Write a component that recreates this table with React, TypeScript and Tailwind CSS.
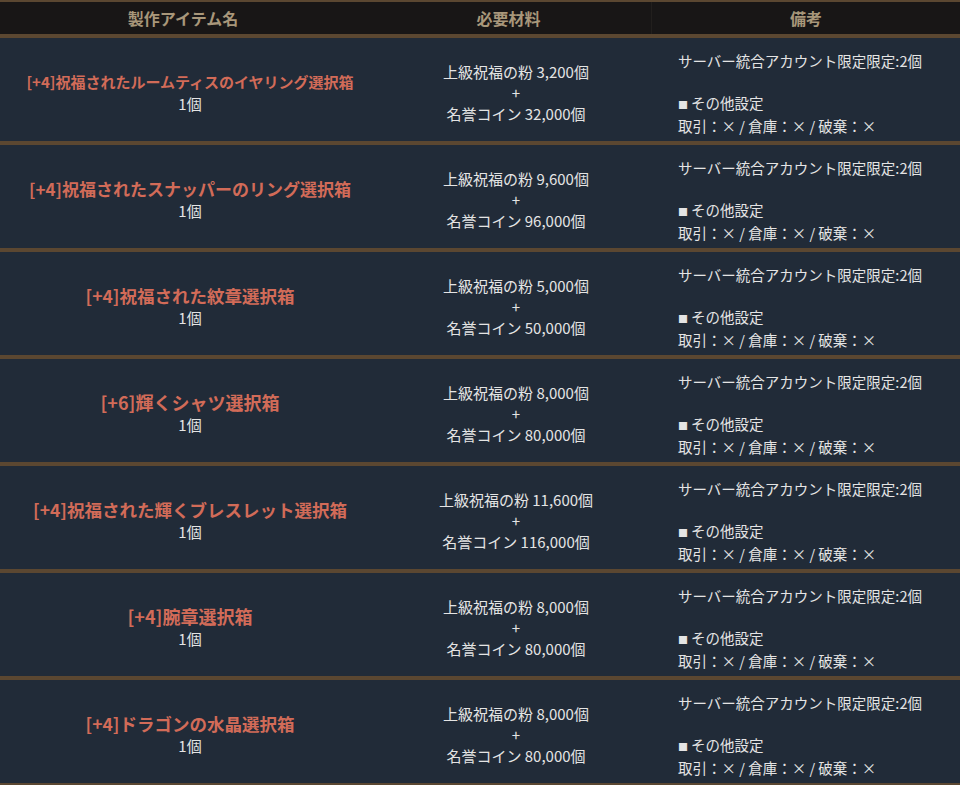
import React from 'react';

interface Item {
    name: string;
    size: string;
    powder: string;
    coin: string;
}

// longer names are set smaller to keep them on one line
const items: Item[] = [
    { name: '[+4]祝福されたルームティスのイヤリング選択箱', size: 'text-[15px]', powder: '3,200', coin: '32,000' },
    { name: '[+4]祝福されたスナッパーのリング選択箱', size: 'text-[17px]', powder: '9,600', coin: '96,000' },
    { name: '[+4]祝福された紋章選択箱', size: 'text-[17.5px]', powder: '5,000', coin: '50,000' },
    { name: '[+6]輝くシャツ選択箱', size: 'text-[18px]', powder: '8,000', coin: '80,000' },
    { name: '[+4]祝福された輝くブレスレット選択箱', size: 'text-[17.5px]', powder: '11,600', coin: '116,000' },
    { name: '[+4]腕章選択箱', size: 'text-[18px]', powder: '8,000', coin: '80,000' },
    { name: '[+4]ドラゴンの水晶選択箱', size: 'text-[17.5px]', powder: '8,000', coin: '80,000' },
];

const font = "font-['Meiryo','Noto_Sans_CJK_JP',sans-serif]";

const App: React.FC = () => {
    return (
        <div className={`w-[960px] h-[785px] overflow-hidden bg-[#212b38] ${font}`}>
            {/* header */}
            <div className="grid grid-cols-[366px_286px_308px] bg-[#181616] border-t-2 border-b-4 border-[#5b4731]">
                <div className="h-[32px] flex items-center justify-center text-[16px] font-bold text-[#a8977a]">製作アイテム名</div>
                <div className="h-[32px] flex items-center justify-center text-[16px] font-bold text-[#a8977a] border-r border-[#221f1d]">必要材料</div>
                <div className="h-[32px] flex items-center justify-center text-[16px] font-bold text-[#a8977a]">備考</div>
            </div>

            {items.map((it, i) => (
                <div key={i} className="grid grid-cols-[366px_286px_308px] h-[107px] border-b-4 border-[#5b4731] text-[#e4e4e4] text-[15px] leading-[21px]">
                    <div className="flex flex-col items-center justify-center pl-[14px] pt-[4px]">
                        <span className={`${it.size} font-bold text-[#d26b58] leading-[23px]`}>{it.name}</span>
                        <span>1個</span>
                    </div>
                    <div className="flex flex-col items-center justify-center pl-[14px] pt-[6px]">
                        <span>上級祝福の粉 {it.powder}個</span>
                        <span>+</span>
                        <span>名誉コイン {it.coin}個</span>
                    </div>
                    <div className="flex flex-col justify-center pl-[26px] pt-[7px] text-[14.5px]">
                        <span>サーバー統合アカウント限定限定:2個</span>
                        <span>&nbsp;</span>
                        <span><span className="text-[10px] align-middle mr-[3px]">■</span>その他設定</span>
                        <span>取引：× / 倉庫：× / 破棄：×</span>
                    </div>
                </div>
            ))}
        </div>
    );
};

export default App;
